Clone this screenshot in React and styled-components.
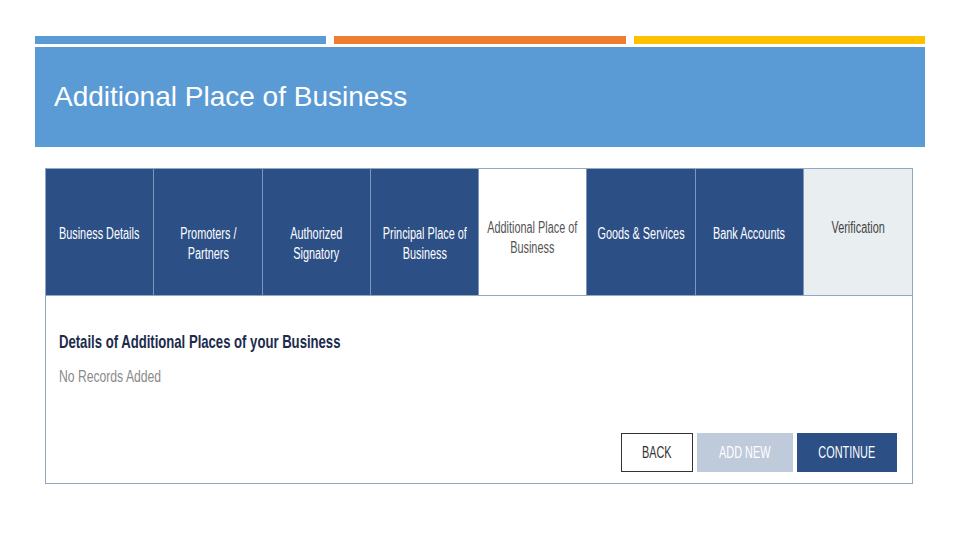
import React from 'react';
import styled, { createGlobalStyle } from 'styled-components';

const GlobalStyle = createGlobalStyle`
  body {
    margin: 0;
    background: #fff;
    font-family: 'Liberation Sans', Arial, sans-serif;
  }
`;

const Slide = styled.div`
  width: 960px;
  height: 540px;
  box-sizing: border-box;
  padding: 0 35px;
  overflow: hidden;
`;

const AccentBars = styled.div`
  display: flex;
  gap: 8px;
  height: 8px;
  margin-top: 36px;
`;

const Bar = styled.div`
  flex: 1;
  background: ${(p) => p.$color};
`;

const Header = styled.div`
  margin-top: 3px;
  height: 100px;
  background: #5b9bd5;
  display: flex;
  align-items: center;
  padding-left: 19px;
`;

const Title = styled.h1`
  margin: 0;
  font-size: 28px;
  font-weight: 400;
  color: #fff;
`;

const Panel = styled.div`
  margin: 21px 12px 0 10px;
  height: 316px;
  box-sizing: border-box;
  border: 1px solid #8ea9c6;
  display: flex;
  flex-direction: column;
`;

const Tabs = styled.div`
  display: grid;
  grid-template-columns: repeat(8, minmax(0, 1fr));
  height: 126px;
  border-bottom: 1px solid #8ea9c6;
  flex-shrink: 0;
`;

const tabColors = {
  done: { bg: '#2c4f86', fg: '#fff' },
  active: { bg: '#fff', fg: '#555' },
  todo: { bg: '#e9eef1', fg: '#444' },
};

const Tab = styled.div`
  display: flex;
  justify-content: center;
  align-items: flex-start;
  padding-top: ${(p) => (p.$raised ? 49 : 55)}px;
  box-sizing: border-box;
  background: ${(p) => tabColors[p.$state].bg};
  color: ${(p) => tabColors[p.$state].fg};
  border-right: 1px solid #7d98bf;
  &:last-child {
    border-right: none;
  }
`;

// the screenshot text is squeezed sideways, so narrow it
const Squeeze = styled.span`
  display: inline-block;
  white-space: nowrap;
  text-align: center;
  font-size: ${(p) => p.$size || 16}px;
  font-weight: ${(p) => (p.$bold ? 700 : 400)};
  line-height: ${(p) => p.$lh || 20}px;
  transform: scaleX(${(p) => p.$sx || 0.68});
  transform-origin: ${(p) => (p.$left ? 'left center' : 'center center')};
`;

const Content = styled.div`
  flex: 1;
  display: flex;
  flex-direction: column;
  padding: 35px 15px 11px 13px;
`;

const SectionTitle = styled.div`
  color: #1c2b4d;
  height: 22px;
`;

const Empty = styled.div`
  color: #8a8a8a;
  margin-top: 14px;
  height: 20px;
`;

const Actions = styled.div`
  margin-top: auto;
  display: flex;
  justify-content: flex-end;
  gap: 4px;
`;

const btn = {
  back: { bg: '#fff', fg: '#333', border: '#333' },
  add: { bg: '#bfcadb', fg: '#fff', border: '#bfcadb' },
  go: { bg: '#2c4f86', fg: '#fff', border: '#2c4f86' },
};

const Button = styled.button`
  width: ${(p) => p.$w}px;
  height: 39px;
  box-sizing: border-box;
  padding: 0;
  display: flex;
  align-items: center;
  justify-content: center;
  overflow: visible;
  font-family: inherit;
  background: ${(p) => btn[p.$kind].bg};
  color: ${(p) => btn[p.$kind].fg};
  border: 1px solid ${(p) => btn[p.$kind].border};
`;

const steps = [
  { label: ['Business Details'], state: 'done' },
  { label: ['Promoters /', 'Partners'], state: 'done' },
  { label: ['Authorized', 'Signatory'], state: 'done' },
  { label: ['Principal Place of', 'Business'], state: 'done' },
  { label: ['Additional Place of', 'Business'], state: 'active', raised: true },
  { label: ['Goods & Services'], state: 'done' },
  { label: ['Bank Accounts'], state: 'done' },
  { label: ['Verification'], state: 'todo', raised: true },
];

export default function App() {
  return (
    <>
      <GlobalStyle />
      <Slide>
        <AccentBars>
          <Bar $color="#5b9bd5" />
          <Bar $color="#ed7d31" />
          <Bar $color="#ffc000" />
        </AccentBars>
        <Header>
          <Title>Additional Place of Business</Title>
        </Header>
        <Panel>
          <Tabs>
            {steps.map((s) => (
              <Tab key={s.label.join()} $state={s.state} $raised={s.raised}>
                <Squeeze>
                  {s.label.map((l, i) => (
                    <React.Fragment key={l}>
                      {i > 0 && <br />}
                      {l}
                    </React.Fragment>
                  ))}
                </Squeeze>
              </Tab>
            ))}
          </Tabs>
          <Content>
            <SectionTitle>
              <Squeeze $size={19} $lh={22} $sx={0.69} $bold $left>
                Details of Additional Places of your Business
              </Squeeze>
            </SectionTitle>
            <Empty>
              <Squeeze $size={16} $sx={0.76} $left>
                No Records Added
              </Squeeze>
            </Empty>
            <Actions>
              <Button $kind="back" $w={72}>
                <Squeeze>BACK</Squeeze>
              </Button>
              <Button $kind="add" $w={96}>
                <Squeeze>ADD NEW</Squeeze>
              </Button>
              <Button $kind="go" $w={100}>
                <Squeeze>CONTINUE</Squeeze>
              </Button>
            </Actions>
          </Content>
        </Panel>
      </Slide>
    </>
  );
}
